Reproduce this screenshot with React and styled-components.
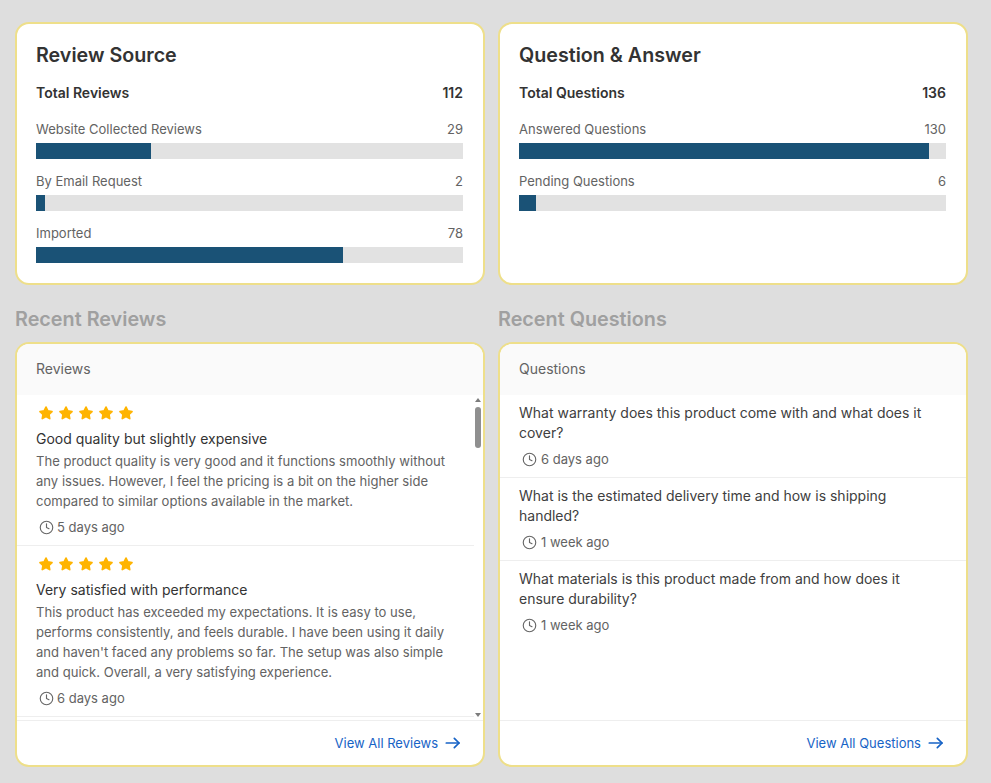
import React from 'react';
import styled, { createGlobalStyle } from 'styled-components';

const GlobalStyle = createGlobalStyle`
	* {
		box-sizing: border-box;
	}
	html, body {
		margin: 0;
		padding: 0;
		background: #dedede;
	}
	body {
		font-family: Inter, "Liberation Sans", sans-serif;
		color: #333;
	}
`;

const sources = [
	{ label: 'Website Collected Reviews', count: 29, pct: 27 },
	{ label: 'By Email Request', count: 2, pct: 2 },
	{ label: 'Imported', count: 78, pct: 72 },
];

const answers = [
	{ label: 'Answered Questions', count: 130, pct: 96 },
	{ label: 'Pending Questions', count: 6, pct: 4 },
];

const reviews = [
	{
		title: 'Good quality but slightly expensive',
		text: 'The product quality is very good and it functions smoothly without any issues. However, I feel the pricing is a bit on the higher side compared to similar options available in the market.',
		time: '5 days ago',
	},
	{
		title: 'Very satisfied with performance',
		text: "This product has exceeded my expectations. It is easy to use, performs consistently, and feels durable. I have been using it daily and haven't faced any problems so far. The setup was also simple and quick. Overall, a very satisfying experience.",
		time: '6 days ago',
	},
];

const questions = [
	{ text: 'What warranty does this product come with and what does it cover?', time: '6 days ago' },
	{ text: 'What is the estimated delivery time and how is shipping handled?', time: '1 week ago' },
	{ text: 'What materials is this product made from and how does it ensure durability?', time: '1 week ago' },
];

const Clock = () => (
	<svg width="15" height="15" viewBox="0 0 24 24" fill="none" stroke="#666" strokeWidth="1.8" strokeLinecap="round" strokeLinejoin="round">
		<circle cx="12" cy="12" r="10" />
		<path d="M12 6v6l4 2" />
	</svg>
);

const Star = () => (
	<svg width="16" height="16" viewBox="0 0 24 24" fill="#ffb400" stroke="#ffb400" strokeWidth="2.6" strokeLinejoin="round">
		<path d="M12 3.2l2.75 5.7 6.25.85-4.55 4.35 1.1 6.2L12 17.3l-5.55 3 1.1-6.2L3 9.75l6.25-.85z" />
	</svg>
);

const Arrow = () => (
	<svg width="16" height="16" viewBox="0 0 24 24" fill="none" stroke="#1763c6" strokeWidth="2.6" strokeLinecap="round" strokeLinejoin="round">
		<path d="M2 12h19" />
		<path d="M14 5l7 7-7 7" />
	</svg>
);

const ScrollArrow = ({ down }) => (
	<svg width="6" height="4" viewBox="0 0 6 4" fill="#7c7c7c">
		<path d={down ? 'M0 0h6L3 4z' : 'M3 0l3 4H0z'} />
	</svg>
);

const StatCard = ({ title, totalLabel, total, rows }) => (
	<Card>
		<CardTitle>{title}</CardTitle>
		<TotalRow>
			<span>{totalLabel}</span>
			<span>{total}</span>
		</TotalRow>
		{rows.map((r) => (
			<Stat key={r.label}>
				<StatRow>
					<span>{r.label}</span>
					<span>{r.count}</span>
				</StatRow>
				<Track>
					<Fill style={{ width: `${r.pct}%` }} />
				</Track>
			</Stat>
		))}
	</Card>
);

const Time = ({ children }) => (
	<TimeRow>
		<Clock />
		{children}
	</TimeRow>
);

const App = () => (
	<Page>
		<GlobalStyle />
		<Column>
			<StatCard title="Review Source" totalLabel="Total Reviews" total={112} rows={sources} />
			<SectionTitle>Recent Reviews</SectionTitle>
			<ListCard>
				<ListHeader>Reviews</ListHeader>
				<ReviewPane>
					{reviews.map((r) => (
						<Review key={r.title}>
							<Stars>
								{[1, 2, 3, 4, 5].map((s) => (
									<Star key={s} />
								))}
							</Stars>
							<ReviewTitle>{r.title}</ReviewTitle>
							<ReviewText>{r.text}</ReviewText>
							<Time>{r.time}</Time>
						</Review>
					))}
					<ScrollRail>
						<ScrollArrow />
						<ScrollThumb />
						<ScrollArrow down />
					</ScrollRail>
				</ReviewPane>
				<ListFooter>
					<ViewAll href="#reviews">
						View All Reviews <Arrow />
					</ViewAll>
				</ListFooter>
			</ListCard>
		</Column>
		<Column>
			<StatCard title="Question &amp; Answer" totalLabel="Total Questions" total={136} rows={answers} />
			<SectionTitle>Recent Questions</SectionTitle>
			<ListCard>
				<ListHeader>Questions</ListHeader>
				<QuestionList>
					{questions.map((q) => (
						<Question key={q.text}>
							<QuestionText>{q.text}</QuestionText>
							<Time>{q.time}</Time>
						</Question>
					))}
				</QuestionList>
				<ListFooter>
					<ViewAll href="#questions">
						View All Questions <Arrow />
					</ViewAll>
				</ListFooter>
			</ListCard>
		</Column>
	</Page>
);

const Page = styled.div`
	display: grid;
	grid-template-columns: 470px 470px;
	column-gap: 13px;
	padding: 22px 0 0 15px;
	height: 783px;
	overflow: hidden;
`;
const Column = styled.div`
	display: flex;
	flex-direction: column;
`;
const Card = styled.div`
	height: 263px;
	padding: 19px 20px 0 19px;
	background: #fff;
	border: 2px solid #eedf8a;
	border-radius: 14px;
`;
const CardTitle = styled.h2`
	margin: 0;
	font-size: 19.7px;
	line-height: 24px;
	font-weight: 600;
	color: #333;
`;
const TotalRow = styled.div`
	display: flex;
	justify-content: space-between;
	margin-top: 16px;
	font-size: 14px;
	line-height: 20px;
	font-weight: 600;
	color: #333;
`;
const Stat = styled.div`
	margin-top: 16px;
	&:nth-of-type(n + 3) {
		margin-top: 12px;
	}
`;
const StatRow = styled.div`
	display: flex;
	justify-content: space-between;
	font-size: 13px;
	line-height: 20px;
	color: #636363;
`;
const Track = styled.div`
	height: 16px;
	margin-top: 4px;
	background: #e2e2e2;
`;
const Fill = styled.div`
	height: 100%;
	background: #1a5276;
`;
const SectionTitle = styled.h3`
	margin: 22px 0 10px;
	height: 25px;
	font-size: 19.8px;
	line-height: 25px;
	font-weight: 600;
	color: #a0a0a0;
`;
const ListCard = styled.div`
	display: flex;
	flex-direction: column;
	height: 425px;
	background: #fff;
	border: 2px solid #eedf8a;
	border-radius: 14px;
	overflow: hidden;
`;
const ListHeader = styled.div`
	flex: none;
	height: 51px;
	padding: 0 19px;
	background: #fafafa;
	font-size: 14px;
	line-height: 50px;
	color: #636363;
`;
const ReviewPane = styled.div`
	position: relative;
	flex: 1;
	min-height: 0;
	padding-right: 9px;
	overflow: hidden;
`;
const ScrollRail = styled.div`
	position: absolute;
	top: 3px;
	bottom: 3px;
	right: 2px;
	width: 6px;
	display: flex;
	flex-direction: column;
	align-items: center;
	justify-content: flex-start;
	svg:last-child {
		margin-top: auto;
	}
`;
const ScrollThumb = styled.div`
	width: 6px;
	height: 41px;
	margin-top: 5px;
	background: #8f8f8f;
	border-radius: 3px;
`;
const Review = styled.div`
	padding: 10px 11px 8px 19px;
	border-bottom: 1px solid #eee;
`;
const Stars = styled.div`
	display: flex;
	gap: 4px;
	padding-left: 2px;
`;
const ReviewTitle = styled.div`
	margin-top: 8px;
	font-size: 14px;
	line-height: 20px;
	color: #333;
`;
const ReviewText = styled.p`
	margin: 2px 0 0;
	font-size: 13.07px;
	line-height: 20px;
	color: #636363;
`;
const TimeRow = styled.div`
	display: flex;
	align-items: center;
	gap: 3px;
	margin-top: 6px;
	padding-left: 3px;
	font-size: 13px;
	line-height: 20px;
	color: #636363;
`;
const QuestionList = styled.div`
	flex: 1;
	min-height: 0;
`;
const Question = styled.div`
	padding: 8px 19px 8px;
	border-bottom: 1px solid #eee;
	&:last-child {
		border-bottom: 0;
	}
	${TimeRow} {
		gap: 4px;
	}
`;
const QuestionText = styled.div`
	font-size: 14px;
	line-height: 20px;
	color: #404040;
`;
const ListFooter = styled.div`
	flex: none;
	display: flex;
	justify-content: flex-end;
	align-items: center;
	height: 45px;
	padding: 0 22px 1px;
	border-top: 1px solid #eee;
`;
const ViewAll = styled.a`
	display: flex;
	align-items: center;
	gap: 7px;
	font-size: 13px;
	color: #1763c6;
	text-decoration: none;
`;

export default App;
